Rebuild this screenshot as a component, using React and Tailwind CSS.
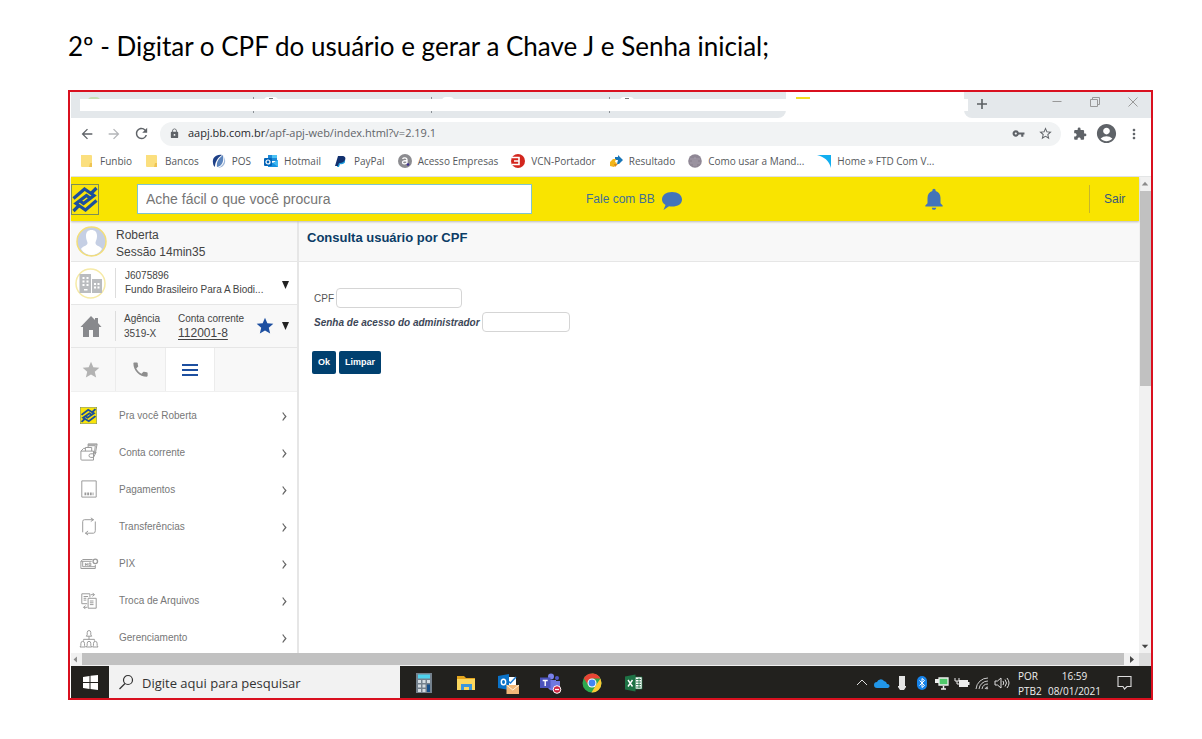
/**
 * Step 2 of the access guide: the bank portal shown inside its browser and desktop frame.
 */
import React from 'react';
import {
  MdArrowBack,
  MdArrowForward,
  MdRefresh,
  MdLock,
  MdVpnKey,
  MdStarBorder,
  MdExtension,
  MdAccountCircle,
  MdMoreVert,
  MdStar,
  MdPhone,
  MdNotifications,
} from 'react-icons/md';

const bookmarks = [
  { label: 'Funbio', icon: 'folder' },
  { label: 'Bancos', icon: 'folder' },
  { label: 'POS', icon: 'pos' },
  { label: 'Hotmail', icon: 'hotmail' },
  { label: 'PayPal', icon: 'paypal' },
  { label: 'Acesso Empresas', icon: 'acesso' },
  { label: 'VCN-Portador', icon: 'vcn' },
  { label: 'Resultado', icon: 'resultado' },
  { label: 'Como usar a Mand...', icon: 'globe' },
  { label: 'Home » FTD Com V...', icon: 'ftd' },
];

const menuItems = [
  { label: 'Pra você Roberta', icon: 'bb' },
  { label: 'Conta corrente', icon: 'wallet' },
  { label: 'Pagamentos', icon: 'barcode' },
  { label: 'Transferências', icon: 'transfer' },
  { label: 'PIX', icon: 'pix' },
  { label: 'Troca de Arquivos', icon: 'files' },
  { label: 'Gerenciamento', icon: 'people' },
];

const bookmarkDrawings = {
  folder: (
    <>
      <path d="M1 1h10a1 1 0 0 1 1 1v11H2a1 1 0 0 1-1-1z" fill="#fbdf7e" />
      <path d="M10 9h2v4H9z" fill="#efc453" />
    </>
  ),
  pos: (
    <>
      <path d="M10 1C4 0 0 4 1 9c0 2 1 3 2 4C3 9 5 4 10 1z" fill="#1d3f86" />
      <path d="M11 1C7 4 4 8 5 13c5-1 7-5 6-12z" fill="#5b84bd" />
      <path d="M12 3c1 5-1 9-6 11 6 0 9-6 6-11z" fill="#9db6d8" />
    </>
  ),
  hotmail: (
    <>
      <path d="M4 1h9v6H4z" fill="#1b8ad8" />
      <path d="M8 1h5v3H8z" fill="#4cc3f5" />
      <path d="M4 6l5 3 5-3v7H4z" fill="#1490df" />
      <path d="M9 9l5-3v7z" fill="#3fb8f2" />
      <rect x="0" y="4" width="8" height="8" rx="1" fill="#0364b8" />
      <circle cx="4" cy="8" r="2" fill="none" stroke="#fff" strokeWidth="1.2" />
    </>
  ),
  paypal: (
    <>
      <path d="M5 4h4c3 0 2 3 2 4s-3 3-5 2l-1 3H3z" fill="#1b9bdc" />
      <path d="M4 2h4c3 0 4 2 3 4S8 9 6 9H5l-1 3H1z" fill="#12306f" />
    </>
  ),
  acesso: (
    <>
      <circle cx="7" cy="7" r="7" fill="#8c8c90" />
      <path
        d="M4.500 4.800c1-1.300 4.500-1.300 4.500 1v4M9 7c-2-.5-4.500-.3-4.500 1.500S8 10.500 9 8.500"
        fill="none"
        stroke="#fff"
        strokeWidth="1.300"
      />
      <circle cx="10" cy="10.500" r="1.300" fill="#3b2d8f" />
    </>
  ),
  vcn: (
    <>
      <circle cx="7" cy="7" r="7" fill="#d3261e" />
      <path d="M1 3.500h7v7H1M3 7h5" fill="none" stroke="#fff" strokeWidth="1.600" />
    </>
  ),
  resultado: (
    <>
      <path d="M6 3h3V1l5 5-4 4H8l1-4H6z" fill="#1976b8" />
      <path d="M4 5h3l-1 3 2 1-3 4-4-1V8z" fill="#f1b51c" />
      <path d="M5 10h4l-3 3z" fill="#d9871b" />
    </>
  ),
  globe: (
    <>
      <circle cx="7" cy="7" r="6.800" fill="#8f8795" />
      <path d="M2 5h10M2 9h10M4 7h6M7 3v2M5 11l4 0" stroke="#aaa3b0" strokeWidth="0.800" />
    </>
  ),
  ftd: <path d="M0 1h14v13C12 6 7 3 0 1z" fill="#12aef0" />,
};

const BookmarkIcon = ({ name }) => (
  <svg viewBox="0 0 14 14" className="w-3.5 h-3.5 shrink-0" aria-hidden="true">
    {bookmarkDrawings[name]}
  </svg>
);

const BankLogo = ({ className }) => (
  <svg viewBox="0 0 28 31" className={className} preserveAspectRatio="none" aria-hidden="true">
    <rect x="0.500" y="0.500" width="27" height="30" fill="#f9e40a" stroke="#7e8f54" />
    <g fill="none" stroke="#1c4f9c" strokeWidth="3.200">
      <path d="M2.500 14.500L13.500 5L23 11.500L12.500 19.500L9 17" />
      <path d="M25.500 16.500L14.500 26L5 19.500L15.500 11.500L19 14" />
      <path d="M20 9.500L25.500 4M2.500 27L8 21.500" />
    </g>
  </svg>
);

const menuDrawings = {
  wallet: (
    <>
      <path d="M1 9h14v10H2a1 1 0 0 1-1-1zM1 9l3-3h2M6 9V5h7v4M9 5V3h8l-1 9" />
      <path d="M9 3V1h10l-2 11M9 2h10M15 12h-3a2 2 0 0 0 0 4h3M15 16l3-6" />
    </>
  ),
  barcode: (
    <>
      <path d="M2 1h16v18H2z" />
      <path d="M5 15.500h2M8 15.500h2M11 15.500h2M14 15.500h1" strokeWidth="3" />
    </>
  ),
  transfer: (
    <>
      <path d="M3 17V5q0-2 2-2h10M12 1l3 2-3 2" />
      <path d="M17 5v10q0 3-2 3H6M9 15.500L6 18l3 2" />
    </>
  ),
  pix: (
    <>
      <path d="M14 5H3L1 7v8h16v-4M1 7h12M3 7v6h14M6 9v3M6 10.500h2M8 9v3M10 9h2v3h-2z" />
      <circle cx="17" cy="7" r="2.500" strokeWidth="1.500" />
    </>
  ),
  files: (
    <>
      <path d="M2 2h9v4M2 2v11h6M4 5h5M4 7h3M4 9h3M9 7h9v11H9zM11 10h4M11 12h4M11 14h4" />
      <path d="M12 3h4M14 1l2 2-2 2M4 17h4M6 15l-2 2 2 2" />
    </>
  ),
  people: (
    <>
      <path d="M7 8q1.500-1 1-4a2 2.300 0 0 1 4 0q-.5 3 1 4zM10 8v4M4 13v-1.500h12V13" />
      <path d="M0 20q1.300-1 1-4a2 2.300 0 0 1 4 0q-.3 3 1 4zM7 20q1.300-1 1-4a2 2.300 0 0 1 4 0q-.3 3 1 4zM14 20q1.300-1 1-4a2 2.300 0 0 1 4 0q-.3 3 1 4z" />
    </>
  ),
};

const MenuIcon = ({ name }) => {
  if (name === 'bb') {
    return <BankLogo className="w-[17px] h-[17px]" />;
  }
  return (
    <svg
      viewBox="0 0 20 20"
      className="w-[18px] h-[18px] overflow-visible"
      fill="none"
      stroke="#9b9b9b"
      strokeWidth="1.100"
      aria-hidden="true"
    >
      {menuDrawings[name]}
    </svg>
  );
};

const TabStrip = () => (
  <div className="flex h-[26px] bg-white">
    <div className="relative flex-1 bg-[#e4e8eb] rounded-br-lg pl-[5px] pt-[5px]">
      <div className="flex h-4">
        <div className="w-[178px] border-r border-[#8b9095] pl-3">
          <div className="w-3 h-1 bg-[#c5dfb4] rounded-t-full" />
        </div>
        <div className="w-[178px] border-r border-[#8b9095] pl-2.5">
          <div className="flex justify-center w-3.5 h-1 pt-px bg-white rounded-t-full">
            <div className="w-1 h-px bg-[#777]" />
          </div>
        </div>
        <div className="w-[178px] border-r border-[#8b9095] pl-2.5">
          <div className="w-3 h-1 bg-white rounded-t-full" />
        </div>
        <div className="flex-1 pl-2.5">
          <div className="flex justify-center w-3.5 h-1 pt-px bg-white rounded-t-full">
            <div className="w-1 h-px bg-[#777]" />
          </div>
        </div>
      </div>
      <div className="absolute left-[9px] right-0 top-[7px] h-3 bg-white" />
    </div>
    <div className="w-[178px] pt-[5px] pl-2.5">
      <div className="w-3.5 h-0.5 bg-[#f3de22]" />
    </div>
    <div className="relative flex items-start w-[187px] bg-[#e4e8eb] rounded-bl-lg pt-1">
      <div className="absolute left-0 top-[7px] w-1 h-3 bg-white" />
      <button aria-label="Nova guia" className="ml-[12px] mt-0.5">
        <svg viewBox="0 0 12 12" className="w-3 h-3" stroke="#5b5f63" strokeWidth="1.600">
          <path d="M6 1v10M1 6h10" />
        </svg>
      </button>
      <div className="flex ml-auto mr-[13px] gap-[28px] mt-px">
        <button aria-label="Minimizar">
          <svg viewBox="0 0 10 10" className="w-2.5 h-2.5" stroke="#999">
            <path d="M0.500 4.500h9" />
          </svg>
        </button>
        <button aria-label="Restaurar">
          <svg viewBox="0 0 10 10" className="w-2.5 h-2.5" stroke="#999" fill="none">
            <path d="M0.500 2.500h7v7h-7zM2.500 2.500v-2h7v7h-2" />
          </svg>
        </button>
        <button aria-label="Fechar">
          <svg viewBox="0 0 10 10" className="w-2.5 h-2.5" stroke="#999">
            <path d="M0.500 0.500l9 9M9.500 0.500l-9 9" />
          </svg>
        </button>
      </div>
    </div>
  </div>
);

const AddressBar = () => (
  <div className="flex items-center h-[31px] pl-2 pr-[9px] text-[#5f6368]">
    <button aria-label="Voltar" className="w-[18px]"><MdArrowBack size={16} /></button>
    <button aria-label="Avançar" className="w-[18px] ml-[9px] text-[#b4b6b9]"><MdArrowForward size={16} /></button>
    <button aria-label="Atualizar" className="w-[18px] ml-[9px]"><MdRefresh size={17} /></button>
    <div className="flex items-center flex-1 h-6 ml-[9px] pl-[9px] pr-2 rounded-full bg-[#f1f3f4]">
      <MdLock size={11} />
      <p className="flex-1 pl-2 text-[11px]">
        <span className="text-[#27292c]">aapj.bb.com.br</span>/apf-apj-web/index.html?v=2.19.1
      </p>
      <button aria-label="Senhas"><MdVpnKey size={13} /></button>
      <button aria-label="Favoritar" className="ml-[13px]"><MdStarBorder size={15} /></button>
    </div>
    <button aria-label="Extensões" className="ml-3"><MdExtension size={14} /></button>
    <button aria-label="Perfil" className="ml-2"><MdAccountCircle size={23} /></button>
    <button aria-label="Mais opções" className="ml-2"><MdMoreVert size={16} /></button>
  </div>
);

const BookmarkBar = () => (
  <nav className="flex items-center h-[28px] pl-[9px] pb-[3px] gap-[13px] border-b border-[#e3e5e6] overflow-hidden">
    {bookmarks.map((item) => (
      <a
        key={item.label}
        href="#"
        className="flex items-center gap-[6px] text-[10px] text-[#55585c] whitespace-nowrap"
      >
        <BookmarkIcon name={item.icon} />
        {item.label}
      </a>
    ))}
  </nav>
);

const PortalHeader = () => (
  <header className="relative flex items-center h-[44px] bg-[#f9e400] text-[12px] text-[#3f6f96] shadow-[0_1px_2px_#bbb]">
    <BankLogo className="w-7 h-[31px] shrink-0" />
    <input
      type="text"
      aria-label="Busca"
      placeholder="Ache fácil o que você procura"
      className="w-[395px] h-[30px] ml-[38px] pl-2 bg-white border border-[#7fc4cf] text-[14px] placeholder:text-[#757575]"
    />
    <a href="#" className="flex items-center ml-[54px] gap-[7px]">
      Fale com BB
      <svg viewBox="0 0 20 18" className="w-5 h-[18px] mt-1" fill="#4374b9" aria-hidden="true">
        <path d="M10 0c6 0 10 3 10 7.500S16 14.500 10 14.500c-1 0-2 0-3-.3L1.500 18l2-5C1 11.500 0 9.500 0 7.500 0 3 4 0 10 0z" />
      </svg>
    </a>
    <button aria-label="Notificações" className="ml-auto text-[#4374b9]">
      <MdNotifications size={26} />
    </button>
    <div className="w-px h-7 ml-[142px] bg-[#c6b62c]" />
    <a href="#" className="w-[49px] pl-3.5 text-[#35577e]">Sair</a>
  </header>
);

const Sidebar = () => (
  <aside className="flex flex-col w-[228px] shrink-0 border-r-2 border-[#e6e6e6] text-[#444]">
    <div className="flex items-center h-[41px] px-[5px] gap-[9px] bg-[#f8f8f8] border-b border-[#e6e6e6]">
      <svg viewBox="0 0 31 31" className="w-[31px] h-[31px]" aria-hidden="true">
        <circle cx="15.500" cy="15.500" r="14.500" fill="#c5cfe4" />
        <path
          d="M10 10c0-4 2-6 5.500-6S21 6 21 10c0 4-1.500 5-1.500 7 0 3 5 3 6.500 6-2.500 4-6 6-10.500 6S7.500 27 5 23c1.500-3 6.500-3 6.500-6 0-2-1.500-3-1.500-7z"
          fill="#fff"
        />
        <circle cx="15.500" cy="15.500" r="14.500" fill="none" stroke="#f3de78" strokeWidth="1.500" />
      </svg>
      <div className="text-[12px] leading-[17px] pt-[5px]">
        <p>Roberta</p>
        <p>Sessão 14min35</p>
      </div>
    </div>
    <div className="flex items-center h-[43px] pl-1 pr-2 border-b border-[#e6e6e6]">
      <svg viewBox="0 0 31 31" className="w-[31px] h-[31px]" aria-hidden="true">
        <circle cx="15.500" cy="15.500" r="14.500" fill="#fff" stroke="#f6eaa6" strokeWidth="1.500" />
        <path d="M4.500 6h11.500v5h11v14H4.500z" fill="#babcbf" />
        <path
          d="M7.500 9h2v2h-2zM11.500 9h2v2h-2zM7.500 12.500h2v2h-2zM11.500 12.500h2v2h-2zM7.500 16h2v2h-2zM11.500 16h2v2h-2zM19 15h2v2h-2zM22.500 15h2v2h-2zM19 18.500h2v2h-2zM22.500 18.500h2v2h-2zM9 21h3.500v1.500H9zM16 6h1v19h-1z"
          fill="#fff"
        />
      </svg>
      <div className="w-px h-[30px] ml-[9px] bg-[#ddd]" />
      <div className="flex-1 ml-[9px] text-[10px] leading-[14px] whitespace-nowrap">
        <p>J6075896</p>
        <p>Fundo Brasileiro Para A Biodi...</p>
      </div>
      <button aria-label="Trocar empresa" className="mt-1">
        <svg viewBox="0 0 7 8" className="w-[7px] h-2" fill="#222"><path d="M0 0h7L3.500 8z" /></svg>
      </button>
    </div>
    <div className="flex items-center h-[43px] pl-2 pr-2 bg-[#f8f8f8] border-b border-[#e6e6e6] text-[10px] leading-[15px]">
      <svg viewBox="0 0 24 24" className="w-6 h-6 text-[#88898d]" fill="currentColor" aria-hidden="true">
        <path d="M12 2L1.500 13H4v10h6v-7h4v7h6V13h2.500L19 9V4h-3v2z" />
      </svg>
      <div className="w-px h-[30px] ml-3 bg-[#ddd]" />
      <div className="w-[62px] pl-2">
        <p>Agência</p>
        <p>3519-X</p>
      </div>
      <div className="flex-1">
        <p className="whitespace-nowrap">Conta corrente</p>
        <p className="text-[12px] underline underline-offset-2">112001-8</p>
      </div>
      <button aria-label="Conta favorita" className="text-[#1d4fa0]"><MdStar size={20} /></button>
      <button aria-label="Trocar conta" className="ml-[7px]">
        <svg viewBox="0 0 7 8" className="w-[7px] h-2" fill="#222"><path d="M0 0h7L3.500 8z" /></svg>
      </button>
    </div>
    <div className="flex h-[44px] bg-[#f8f8f8] border-b border-[#f0f0f0] text-[#8e8e8e]">
      <button aria-label="Favoritos" className="flex items-center justify-center w-[45px] border-r border-[#ececec] pr-1 text-[#b3b3b3]">
        <MdStar size={20} />
      </button>
      <button aria-label="Telefones" className="flex items-center justify-center w-[50px] border-r border-[#ececec]">
        <MdPhone size={19} />
      </button>
      <button aria-label="Menu" className="flex items-center justify-center w-[49px] bg-white border-r border-[#ececec]">
        <svg viewBox="0 0 16 12" className="w-4 h-3" fill="#1d4fa0">
          <path d="M0 0h16v2H0zM0 5h16v2H0zM0 10h16v2H0z" />
        </svg>
      </button>
    </div>
    <nav className="flex flex-col flex-1 justify-between pt-3 pb-1">
      {menuItems.map((item) => (
        <a key={item.label} href="#" className="flex items-center h-[22px] pl-[9px] pr-2.5 text-[10px] text-[#777]">
          <span className="w-[39px]"><MenuIcon name={item.icon} /></span>
          <span className="flex-1">{item.label}</span>
          <svg viewBox="0 0 5 9" className="w-[5px] h-[9px] mt-0.5" fill="none" stroke="#666" strokeWidth="1.200">
            <path d="M0.700 0.500Q2 2.500 3.800 4.500 2 6.500 0.700 8.500" />
          </svg>
        </a>
      ))}
    </nav>
  </aside>
);

const QueryForm = () => (
  <main className="flex-1">
    <h1 className="h-[41px] pl-2 pt-[7px] bg-[#f8f8f8] border-b border-[#e6e6e6] text-[13px] leading-5 font-bold text-[#0b3c66]">
      Consulta usuário por CPF
    </h1>
    <form className="pl-[13px] pt-[26px]" onSubmit={(e) => e.preventDefault()}>
      <div className="flex items-center gap-0.5 pl-0.5">
        <label htmlFor="cpf" className="text-[10px] text-[#555]">CPF</label>
        <input id="cpf" type="text" className="w-[126px] h-5 px-1 border border-[#d5d5d5] rounded text-[11px]" />
      </div>
      <div className="flex items-center gap-0.5 pl-0.5 mt-1">
        <label htmlFor="senha" className="text-[10px] font-bold italic text-[#3d4757]">
          Senha de acesso do administrador
        </label>
        <input id="senha" type="password" className="w-[88px] h-5 px-1 border border-[#d5d5d5] rounded text-[11px]" />
      </div>
      <div className="flex gap-[3px] mt-[19px] text-[9px] font-bold text-white">
        <button type="submit" className="h-[23px] px-1.5 bg-[#00406f] rounded-xs">Ok</button>
        <button type="reset" className="h-[23px] px-1.5 bg-[#00406f] rounded-xs">Limpar</button>
      </div>
    </form>
  </main>
);

const VerticalScroll = () => (
  <div className="flex flex-col items-end w-3 bg-[#f1f1f1]">
    <svg viewBox="0 0 13 13" className="w-3 h-[14px]" fill="#8b8b8b"><path d="M3 8l3.500-4L10 8z" /></svg>
    <div className="w-[11px] h-[41%] bg-[#c1c1c1]" />
    <svg viewBox="0 0 13 13" className="w-3 h-[13px] mt-auto" fill="#444"><path d="M3 4.500h7l-3.500 4z" /></svg>
  </div>
);

const HorizontalScroll = () => (
  <div className="flex h-[13px] bg-[#f1f1f1]">
    <svg viewBox="0 0 13 13" className="w-[11px] h-[13px]" fill="#8b8b8b"><path d="M7 3v7L3 6.500z" /></svg>
    <div className="flex-1 h-3 bg-[#c1c1c1]" />
    <svg viewBox="0 0 13 13" className="w-[15px] h-[13px]" fill="#444"><path d="M5 3v7l4-3.500z" /></svg>
    <div className="w-3 bg-[#dcdcdc]" />
  </div>
);

const appIcons = [
  {
    label: 'Calculadora',
    drawing: (
      <>
        <rect x="2" y="0" width="16" height="20" fill="#74818d" />
        <rect x="4" y="1.500" width="12" height="4" fill="#4ed3ee" />
        <path d="M4 7h3v3H4zM8.500 7h3v3h-3zM13 7h3v3h-3zM4 11.500h3v3H4zM8.500 11.500h3v3h-3zM4 16h3v3H4zM8.500 16h3v3h-3z" fill="#d4dce2" />
        <path d="M13 11.500h3V19h-3z" fill="#164f8a" />
      </>
    ),
  },
  {
    label: 'Explorador de Arquivos',
    drawing: (
      <>
        <path d="M1 3h7l2 2h9v12H1z" fill="#e3a51e" />
        <path d="M1 6h18v11H1z" fill="#fbd75f" />
        <path d="M5 11h11v6h-3v-3H8v3H5z" fill="#3a96dd" />
      </>
    ),
  },
  {
    label: 'Outlook',
    drawing: (
      <>
        <path d="M10 4h8v9h-8z" fill="#fff" />
        <path d="M10 8l2.500 2L18 4" fill="none" stroke="#1c7cd5" strokeWidth="1.500" />
        <path d="M0 3l11-2v16L0 15z" fill="#0a72c8" />
        <ellipse cx="5.500" cy="9" rx="2.200" ry="2.800" fill="none" stroke="#fff" strokeWidth="1.400" />
        <path d="M8.500 12H21v9H8.500z" fill="#f2b879" />
        <path d="M8.500 12l6.300 5 6.200-5" fill="none" stroke="#fff2dd" />
      </>
    ),
  },
  {
    label: 'Teams',
    drawing: (
      <>
        <circle cx="11" cy="3.500" r="3" fill="#7b83eb" />
        <circle cx="17" cy="5" r="2" fill="#5059c9" />
        <path d="M8 7h8v8q-4 5-8 0zM15 8h5v7h-5z" fill="#6f78df" />
        <rect x="0" y="4.500" width="10.500" height="10.500" fill="#4b53bc" />
        <path d="M2.700 7.500h5M5.200 7.500v5.500" stroke="#fff" strokeWidth="1.400" />
        <circle cx="17" cy="16.500" r="3.800" fill="#d0213c" stroke="#fff" />
        <path d="M15 16.500h4" stroke="#fff" strokeWidth="1.300" />
      </>
    ),
  },
  {
    label: 'Chrome',
    drawing: (
      <>
        <circle cx="10" cy="10" r="9.500" fill="#2da94f" />
        <path d="M10 .5a9.500 9.500 0 0 1 9.500 9.500 9.500 9.500 0 0 1-10 9.500L14 12 18.500 5.500z" fill="#fcc934" />
        <path d="M1.800 5.200A9.500 9.500 0 0 1 18.400 5.500H10a4.500 4.500 0 0 0-4 6.500z" fill="#e84435" />
        <circle cx="10" cy="10" r="4.500" fill="#fff" />
        <circle cx="10" cy="10" r="3.400" fill="#4285f4" />
      </>
    ),
  },
  {
    label: 'Excel',
    drawing: (
      <>
        <path d="M11 4h7v12h-7z" fill="#fff" stroke="#1e7245" strokeWidth=".7" />
        <path d="M12 6.500h5M12 9h5M12 11.500h5M12 14h5M15 5v10" stroke="#1e7245" strokeWidth=".8" />
        <path d="M1 3.500l10.500-2v17L1 16.500z" fill="#1e7245" />
        <path d="M4 7l4.500 6.500M8.500 7L4 13.500" stroke="#fff" strokeWidth="1.400" />
      </>
    ),
  },
];

const trayIcons = [
  <path key="up" d="M3 10l5-5 5 5" fill="none" stroke="#ddd" />,
  <path key="cloud" d="M3 13a3 3 0 0 1 0-6 4 4 0 0 1 7-1 3.500 3.500 0 0 1 3 3 2 2 0 0 1 1 4z" fill="#2196e8" />,
  <path key="usb" d="M5 1h6v10H5zM4 11h8v1l-2 3H6l-2-3z" fill="#e4e4e4" />,
  <g key="bluetooth">
    <rect x="3" y="1" width="10" height="14" rx="5" fill="#1683ea" />
    <path d="M5.500 5.500l5 5L8 12.500v-9l2.500 2-5 5" fill="none" stroke="#fff" />
  </g>,
  <g key="screen">
    <path d="M5 3h9v7H5z" fill="#4fc96a" stroke="#eee" strokeWidth="1.300" />
    <path d="M9.500 11v3M7 14h5" stroke="#eee" strokeWidth="1.500" />
    <path d="M1 4h4v4H1z" fill="#eee" />
  </g>,
  <g key="battery">
    <path d="M5 5h9v7H5zM14 7h1.500v3H14z" fill="#eee" />
    <path d="M1 3v3h4V3M3 6v3h2" fill="none" stroke="#eee" />
  </g>,
  <g key="wifi" fill="none" stroke="#ccc">
    <path d="M2 14A12 12 0 0 1 14 3M5 14a9 9 0 0 1 9-8M8 14a6 6 0 0 1 6-5M11 14a3 3 0 0 1 3-2" />
    <circle cx="13" cy="13.500" r=".6" />
  </g>,
  <g key="sound" fill="none" stroke="#ddd">
    <path d="M1 6h2.500L7 3v10l-3.500-3H1zM9 6q1.500 2 0 4M11 4.500q3 3.500 0 7M13 3q4 5 0 10" />
  </g>,
];

const Taskbar = () => (
  <footer className="flex items-stretch h-8 bg-[#22211e] text-[#eee]">
    <button aria-label="Iniciar" className="flex items-center justify-center w-[38px]">
      <svg viewBox="0 0 15 15" className="w-[15px] h-[15px]" fill="#fff">
        <path d="M0 2l6.500-1v6H0zM7.500.8L15 0v7H7.500zM0 8h6.500v6L0 13zM7.500 8H15v7l-7.500-1z" />
      </svg>
    </button>
    <div className="flex items-center w-[291px] pl-[9px] pt-1 gap-2 bg-[#f2f2f2]">
      <svg viewBox="0 0 16 16" className="w-4 h-4 mb-1" fill="none" stroke="#333" strokeWidth="1.200">
        <circle cx="10" cy="6" r="4.500" />
        <path d="M7 9.500L1.500 15" />
      </svg>
      <input
        type="text"
        aria-label="Pesquisar"
        placeholder="Digite aqui para pesquisar"
        className="flex-1 min-w-0 bg-transparent text-[13px] placeholder:text-[#333]"
      />
    </div>
    <div className="flex items-center ml-[14px] pt-px gap-[22px]">
      {appIcons.map((app) => (
        <button key={app.label} aria-label={app.label}>
          <svg viewBox="0 0 20 20" className="w-5 h-5 overflow-visible">{app.drawing}</svg>
        </button>
      ))}
    </div>
    <div className="flex items-center ml-auto pt-px gap-1">
      {trayIcons.map((icon) => (
        <svg key={icon.key} viewBox="0 0 16 16" className="w-4 h-4" aria-hidden="true">{icon}</svg>
      ))}
    </div>
    <div className="w-[22px] ml-2 pt-[3px] text-[10px] leading-[15px]">
      <p>POR</p>
      <p>PTB2</p>
    </div>
    <div className="ml-2 pt-[3px] text-[10px] leading-[15px] text-center">
      <p>16:59</p>
      <p>08/01/2021</p>
    </div>
    <button aria-label="Notificações do sistema" className="ml-4 mr-[19px]">
      <svg viewBox="0 0 15 15" className="w-[15px] h-[15px]" fill="none" stroke="#ddd" strokeWidth="1.100">
        <path d="M1 1.500h13v10h-4L7.500 14 6 11.500H1z" />
      </svg>
    </button>
  </footer>
);

const App = () => (
  <div className="flex flex-col min-h-screen pl-[68px] pr-[49px] pb-[39px] bg-white">
    <h2 className="h-[90px] pt-[30px] text-[26px] leading-8 text-black font-['Lato',sans-serif]">
      2º - Digitar o CPF do usuário e gerar a Chave J e Senha inicial;
    </h2>
    <div className="flex flex-col flex-1 pl-px border-2 border-[#d9101f] font-['Open_Sans','Noto_Sans',sans-serif]">
      <TabStrip />
      <AddressBar />
      <BookmarkBar />
      <div className="flex flex-1 font-['Liberation_Sans',Arial,sans-serif]">
        <div className="flex flex-col flex-1">
          <PortalHeader />
          <div className="flex flex-1">
            <Sidebar />
            <QueryForm />
          </div>
        </div>
        <VerticalScroll />
      </div>
      <HorizontalScroll />
      <Taskbar />
    </div>
  </div>
);

export default App;
